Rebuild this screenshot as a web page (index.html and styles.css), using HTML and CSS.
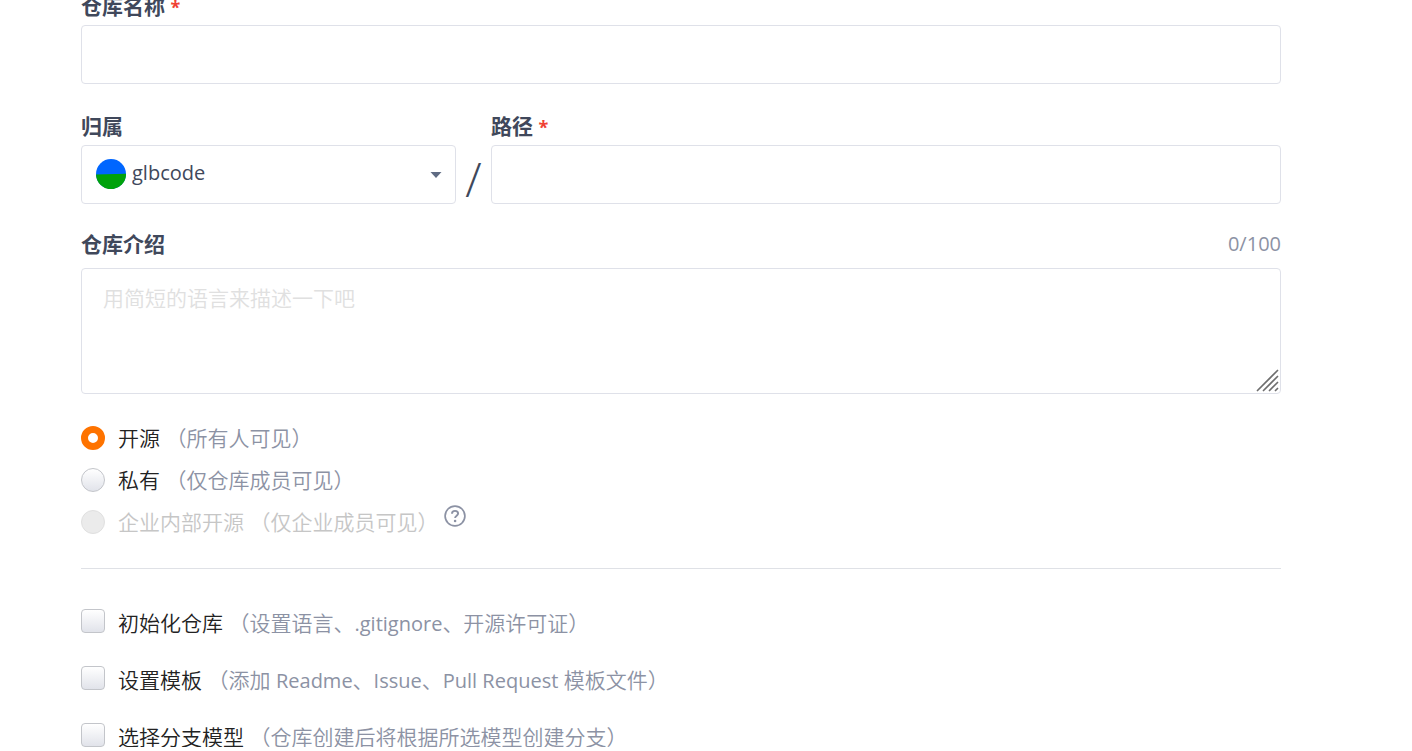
FILE: index.html
```html
<!DOCTYPE html>
<html lang="zh-CN">
<head>
<meta charset="utf-8">
<title>新建仓库</title>
<link rel="stylesheet" href="styles.css">
</head>
<body>
<main class="viewport">
<form class="form">
  <div class="field">
    <label class="label" for="name">仓库名称 <span class="required">*</span></label>
    <input class="control" id="name" type="text" required>
  </div>

  <div class="location">
    <div class="field">
      <label class="label" for="owner">归属</label>
      <div class="owner">
        <svg class="avatar" viewBox="0 0 30 30" aria-hidden="true">
          <circle cx="15" cy="15" r="15" fill="#0066ff"/>
          <path d="M0 15.6L30 14.8A15 15 0 0 1 0 15.6Z" fill="#00a20b"/>
        </svg>
        <select class="control select" id="owner"><option>glbcode</option></select>
        <svg class="caret" viewBox="0 0 12 6" aria-hidden="true"><path d="M0.5 0H11.5L6 6Z" fill="#5f6b83"/></svg>
      </div>
    </div>
    <span class="slash">/</span>
    <div class="field">
      <label class="label" for="path">路径 <span class="required">*</span></label>
      <input class="control" id="path" type="text" required>
    </div>
  </div>

  <div class="field intro">
    <div class="intro-head">
      <label class="label" for="intro">仓库介绍</label>
      <span class="counter">0/100</span>
    </div>
    <div class="area">
      <textarea class="control textarea" id="intro" maxlength="100" placeholder="用简短的语言来描述一下吧"></textarea>
      <svg class="grip" viewBox="0 0 24 24" aria-hidden="true"><path d="M1.5 21.5L21.5 1.5M7.5 21.5L21.5 7.5M13.5 21.5L21.5 13.5M19.5 21.5L21.5 19.5" stroke="#6e6e6e" stroke-width="1.7" stroke-linecap="round"/></svg>
    </div>
  </div>

  <div class="visibility">
    <label class="choice"><input class="mark radio" type="radio" name="visibility" checked><span>开源 <span class="hint">（所有人可见）</span></span></label>
    <label class="choice"><input class="mark radio" type="radio" name="visibility"><span>私有 <span class="hint">（仅仓库成员可见）</span></span></label>
    <label class="choice disabled"><input class="mark radio" type="radio" name="visibility" disabled><span>企业内部开源 <span class="hint">（仅企业成员可见）</span></span>
      <svg class="help" viewBox="0 0 22 22" fill="none" stroke="#8c92a4" aria-hidden="true"><circle cx="11" cy="11" r="9.9" stroke-width="1.7"/><path d="M8 8.7C8 6.8 9.2 5.9 11 5.9S14.1 7 14.1 8.6C14.1 10.7 11.1 10.7 11.1 13" stroke-width="1.9"/><circle cx="11.1" cy="16" r="1.3" fill="#8c92a4" stroke="none"/></svg>
    </label>
  </div>

  <div class="options">
    <label class="choice"><input class="mark check" type="checkbox"><span class="option-text">初始化仓库 <span class="hint">（设置语言、<span class="latin">.gitignore</span>、开源许可证）</span></span></label>
    <label class="choice"><input class="mark check" type="checkbox"><span class="option-text">设置模板 <span class="hint">（添加 <span class="latin">Readme</span>、<span class="latin">Issue</span>、<span class="latin">Pull Request</span> 模板文件）</span></span></label>
    <label class="choice"><input class="mark check" type="checkbox"><span class="option-text">选择分支模型 <span class="hint">（仓库创建后将根据所选模型创建分支）</span></span></label>
  </div>
</form>
</main>
</body>
</html>
```
FILE: styles.css
```css
* { box-sizing: border-box; }

body {
  margin: 0;
  background: #fff;
  color: #40485b;
  font-family: "Open Sans", "Noto Sans CJK SC", sans-serif;
  font-size: 21px;
  line-height: 30px;
}

.viewport {
  height: calc(100vh - 4px);
  overflow: hidden;
}

.form {
  margin-top: -9px;
  padding: 0 131px 0 81px;
}

.field {
  display: flex;
  flex-direction: column;
  gap: 4px;
}

.label { font-weight: 700; }

.required {
  color: #f04134;
  font-size: 18px;
  line-height: 1;
}

.control {
  width: 100%;
  height: 59px;
  margin: 0;
  padding: 0 20px;
  border: 1px solid #dfe1e9;
  border-radius: 4px;
  background: #fff;
  color: #40485b;
  font: inherit;
}

.location {
  display: grid;
  grid-template-columns: minmax(0, 375fr) 35px minmax(0, 790fr);
  align-items: end;
  margin-top: 27px;
}

.owner { position: relative; }

.select {
  appearance: none;
  padding: 0 50px 4px;
  font-size: 20px;
}

.avatar {
  position: absolute;
  top: 14px;
  left: 15px;
  width: 30px;
  height: 30px;
}

.caret {
  position: absolute;
  top: 27px;
  right: 14px;
  width: 12px;
  height: 6px;
}

.slash {
  font-size: 48px;
  font-weight: 300;
  line-height: 50px;
  text-align: center;
}

.intro {
  margin-top: 25px;
  gap: 9px;
}

.intro-head {
  display: flex;
  justify-content: space-between;
}

.counter {
  color: #8c92a4;
  font-size: 20px;
}

.area {
  position: relative;
  display: flex;
}

.textarea {
  height: 126px;
  padding: 14px 21px;
  resize: vertical;
}

.textarea::placeholder {
  color: #e0e0e0;
  font-weight: 350;
}
.textarea::-webkit-resizer { display: none; }

.grip {
  position: absolute;
  right: 1px;
  bottom: 1px;
  width: 24px;
  height: 24px;
  pointer-events: none;
}

.visibility {
  padding: 23px 0 25px;
  border-bottom: 1px solid #dfe1e6;
}

.choice {
  display: flex;
  align-items: center;
  height: 42px;
  color: #222;
  font-weight: 350;
}

.hint { color: #8c92a4; }

.latin {
  font-size: 20px;
  font-weight: 400;
  line-height: 1;
}

.option-text { padding-top: 3px; }

.mark {
  appearance: none;
  flex: none;
  width: 24px;
  height: 24px;
  margin: 0 13px 0 0;
  border: 1px solid #c3c5ca;
  background: linear-gradient(#fff, #e1e3ea);
}

.radio { border-radius: 50%; }

.radio:checked {
  border: 7px solid #fe7300;
  background: #fff;
}

.radio:disabled {
  border-color: #e0e0e0;
  background: #ebebeb;
}

.check { border-radius: 4px; }

.disabled,
.disabled .hint { color: #c6c6c6; }

.help {
  align-self: flex-start;
  width: 22px;
  height: 22px;
  margin: 4px 0 0 6px;
}

.options {
  display: grid;
  gap: 15px;
  padding-top: 31px;
}
```
